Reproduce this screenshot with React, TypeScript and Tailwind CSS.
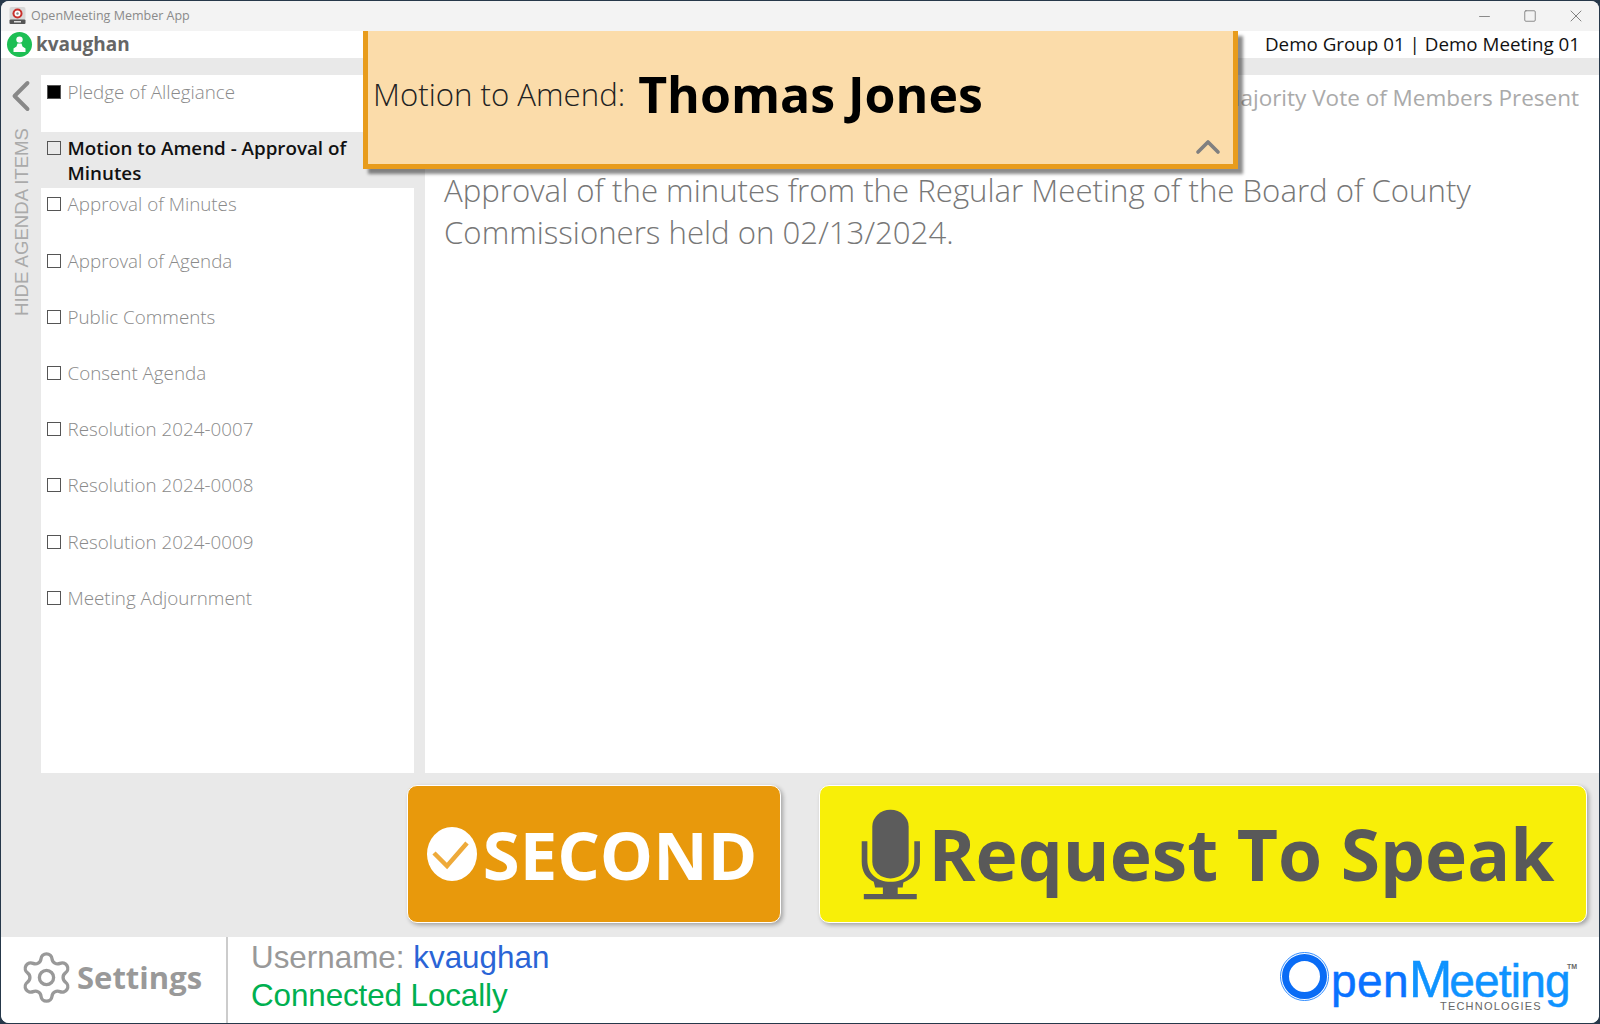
import { ChevronLeft, ChevronUp, Settings, Minus, Square, X } from 'lucide-react'

const items = [
  { id: 1, title: 'Pledge of Allegiance', done: true },
  { id: 2, title: 'Motion to Amend - Approval of Minutes', active: true },
  { id: 3, title: 'Approval of Minutes' },
  { id: 4, title: 'Approval of Agenda' },
  { id: 5, title: 'Public Comments' },
  { id: 6, title: 'Consent Agenda' },
  { id: 7, title: 'Resolution 2024-0007' },
  { id: 8, title: 'Resolution 2024-0008' },
  { id: 9, title: 'Resolution 2024-0009' },
  { id: 10, title: 'Meeting Adjournment' },
]

const openSans = "font-['Open_Sans',sans-serif]"
const arial = "font-['Liberation_Sans',sans-serif]"

function AppIcon() {
  return (
    <svg width="17" height="17" viewBox="0 0 17 17" className="-mt-[1px]">
      <rect x="0.5" y="0" width="16" height="13" rx="2" fill="#d8d8d8" />
      <circle cx="8.5" cy="6.5" r="5" fill="#c9302c" />
      <circle cx="8.5" cy="6.5" r="3" fill="#fff" />
      <circle cx="8.5" cy="6.5" r="1.2" fill="#888" />
      <rect x="0.5" y="12.5" width="16" height="4.5" rx="1" fill="#555" />
      <rect x="5" y="14" width="7" height="1.5" fill="#ddd" />
    </svg>
  )
}

function Avatar() {
  return (
    <div className="w-[25px] h-[25px] rounded-full bg-[#1dbf54] flex items-center justify-center">
      <svg width="13" height="17" viewBox="0 0 13 17" fill="#fff">
        <circle cx="6.5" cy="3.6" r="3.2" />
        <path d="M4.5 7.5h4l1 3 3 2V16H.5v-3.5l3-2z" />
      </svg>
    </div>
  )
}

function Mic() {
  return (
    <svg width="60" height="91" viewBox="1320 116 170 274" preserveAspectRatio="none" className="shrink-0" fill="#5c5c5c">
      <rect x="1352" y="118" width="103" height="207" rx="51" />
      <path d="M1322 213H1338V270C1338 310 1365 335 1404 335C1443 335 1471 310 1471 270V213H1487V275C1487 305 1470 325 1440 337L1438 352H1424V372H1478V388H1328V372H1382V352H1360L1356 335C1335 325 1322 305 1322 275Z" />
    </svg>
  )
}

function CheckBadge() {
  return (
    <svg width="50" height="54" viewBox="0 0 50 54" className="shrink-0">
      <ellipse cx="25" cy="27" rx="25" ry="27" fill="#fff" />
      <path d="M7 26l13 13 20-23" fill="none" stroke="#eeaa3a" strokeWidth="4.5" />
    </svg>
  )
}

function Logo() {
  return (
    <div className="relative w-[296px] h-[60px] mr-[22px] mb-[8px] flex items-start">
      <div className="w-[45px] h-[45px] mt-[8px] ml-[1px] mr-[4px] rounded-full border-[7px] border-[#0a6cf5] outline outline-1 outline-[#2f8cff] outline-offset-1 shrink-0" />
      <div className={`${arial} leading-[52px] mt-[7px] whitespace-nowrap [-webkit-text-stroke:0.5px]`}>
        <span className="text-[46px] tracking-[0.4px] text-[#0a72ff]">pen</span>
        <span className="text-[52px] tracking-[-3px] text-[#0f93ff]">M</span>
        <span className="text-[46px] tracking-[-0.8px] text-[#0f93ff]">eeting</span>
      </div>
      <span className={`${arial} absolute left-[159px] top-[55px] text-[11px] leading-none tracking-[1.2px] text-[#666]`}>TECHNOLOGIES</span>
      <span className={`${arial} absolute right-[0px] top-[17px] text-[7px] font-bold leading-none text-[#666]`}>TM</span>
    </div>
  )
}

export default function App() {
  return (
    <div className="w-[1600px] h-[1024px] bg-[#26384a] overflow-hidden p-[1px] relative">
      <div className="h-full rounded-[8px] overflow-hidden bg-[#e9e9e9] flex flex-col">
        {/* title bar */}
        <div className="h-[30px] shrink-0 bg-[#f3f3f3] flex items-center pl-[8px] text-[#8a8a8a]">
          <AppIcon />
          <span className={`${openSans} text-[12.5px] ml-[5px]`}>OpenMeeting Member App</span>
          <div className="ml-auto flex items-center text-[#777]">
            <div className="w-[46px] flex justify-center"><Minus size={17} strokeWidth={1.2} /></div>
            <div className="w-[46px] flex justify-center"><Square size={14} strokeWidth={1.4} /></div>
            <div className="w-[46px] flex justify-center"><X size={20} strokeWidth={1.1} /></div>
          </div>
        </div>

        {/* user header */}
        <div className="h-[27px] shrink-0 bg-white flex items-center pl-[6px] pr-[19px]">
          <Avatar />
          <span className={`${openSans} text-[19px] font-bold text-[#666] ml-[4px]`}>kvaughan</span>
          <span className={`${openSans} text-[18.8px] text-[#111] ml-auto`}>Demo Group 01 | Demo Meeting 01</span>
        </div>

        {/* agenda + content */}
        <div className="flex flex-1 min-h-0 pt-[17px]">
          <div className="w-[40px] shrink-0 flex flex-col items-center">
            <ChevronLeft size={52} strokeWidth={1.8} className="shrink-0 text-[#888] -mt-[5px]" />
            <span className={`${arial} text-[18.6px] text-[#aaa] [writing-mode:vertical-rl] rotate-180 mt-[6px] ml-[1px]`}>HIDE AGENDA ITEMS</span>
          </div>
          <div className="w-[373px] h-[698px] shrink-0 bg-white pt-[1px]">
            {items.map(it => (
              <div key={it.id} className={`h-[56.2px] flex pl-[6px] pr-[10px] pt-[3px] ${it.active ? 'bg-[#e9e9e9]' : ''}`}>
                <div className={`w-[14px] h-[14px] mt-[6px] shrink-0 border border-[#555] ${it.done ? 'bg-black' : ''}`} />
                <span className={`${openSans} text-[18.8px] ml-[6.5px] ${it.active ? 'mt-[1px] leading-[25px] font-semibold text-[#111]' : 'leading-[26px] font-light text-[#8a8a8a]'}`}>{it.title}</span>
              </div>
            ))}
          </div>
          <div className="w-[11px] shrink-0" />
          <div className="flex-1 h-[698px] bg-white pl-[19px] pr-[20px] pt-[3px]">
            <div className={`${openSans} text-[22.5px] leading-[40px] text-[#aaa] text-right`}>Majority Vote of Members Present</div>
            <p className={`${openSans} text-[31.2px] leading-[42px] font-light text-[#777] mt-[51px]`}>Approval of the minutes from the Regular Meeting of the Board of County Commissioners held on 02/13/2024.</p>
          </div>
        </div>

        {/* buttons */}
        <div className="h-[164px] shrink-0 flex justify-end items-start gap-[38px] pt-[12px] pr-[12px]">
          <button className={`${openSans} w-[374px] h-[138px] rounded-[10px] bg-[#e8990c] border border-white shadow-[2px_2px_4px_rgba(0,0,0,0.3)] flex items-center justify-center gap-[6px] pr-[4px] text-white font-bold text-[67px]`}>
            <CheckBadge />
            SECOND
          </button>
          <button className={`${openSans} w-[768px] h-[138px] rounded-[10px] bg-[#f8ef08] border border-white shadow-[2px_2px_4px_rgba(0,0,0,0.3)] flex items-center justify-center gap-[8px] pl-[9px] text-[#595959] font-bold text-[71.3px]`}>
            <Mic />
            Request To Speak
          </button>
        </div>

        {/* footer */}
        <div className="h-[86px] shrink-0 bg-white flex items-center">
          <div className="w-[227px] h-full shrink-0 flex items-center pl-[17px] pb-[6px] gap-[2px] border-r-2 border-[#ccc]">
            <Settings size={57} strokeWidth={1.4} className="text-[#999]" />
            <span className={`${openSans} text-[31px] font-bold text-[#999]`}>Settings</span>
          </div>
          <div className={`${arial} text-[31.4px] leading-[38.5px] pl-[23px] pb-[6px]`}>
            <div className="text-[#999]">Username: <span className="text-[#2a64d6]">kvaughan</span></div>
            <div className="text-[#00b050] tracking-[-0.1px]">Connected Locally</div>
          </div>
          <div className="ml-auto">
            <Logo />
          </div>
        </div>
      </div>

      {/* motion popup */}
      <div className="absolute left-[363px] top-[31px] w-[875px] h-[138px] bg-[#fbdcaa] border-[5px] border-t-0 border-[#e89c1c] shadow-[5px_5px_3px_rgba(0,0,0,0.45)] flex items-center pl-[5px] pb-[7px]">
        <span className={`${openSans} text-[31.2px] font-light text-[#222]`}>Motion to Amend:</span>
        <span className={`${openSans} text-[50px] font-bold text-black ml-[13px]`}>Thomas Jones</span>
        <ChevronUp size={40} strokeWidth={2.2} className="absolute right-[5px] bottom-[-3px] text-[#808080]" />
      </div>
    </div>
  )
}
